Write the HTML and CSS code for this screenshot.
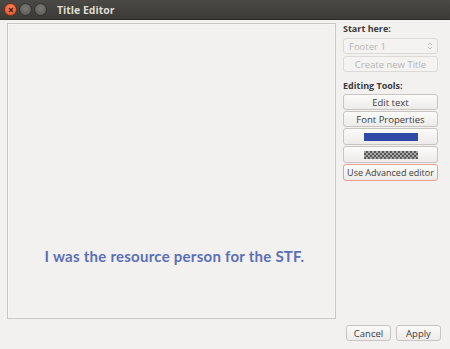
FILE: index.html
```html
<!DOCTYPE html>
<html>
<head>
<meta charset="utf-8">
<link rel="stylesheet" href="styles.css">
</head>
<body>
<div class="window">
  <div class="titlebar">
    <div class="wbtns">
      <span class="wbtn close"><svg width="8" height="8" viewBox="0 0 8 8"><path d="M2 2L6 6M6 2L2 6" stroke="#4a1a0a" stroke-width="1.3"/></svg></span>
      <span class="wbtn"></span>
      <span class="wbtn"></span>
    </div>
    <div class="title">Title Editor</div>
  </div>
  <div class="content">
    <div class="main">
      <div class="canvas">
        <div class="sample">I was the resource person for the STF.</div>
      </div>
      <div class="side">
        <div class="label">Start here:</div>
        <div class="combo disabled"><span>Footer 1</span><svg width="6" height="10" viewBox="0 0 6 10"><path d="M1 4L3 2L5 4M1 6L3 8L5 6" fill="none" stroke="#bbb" stroke-width="1"/></svg></div>
        <div class="btn disabled">Create new Title</div>
        <div class="label tools">Editing Tools:</div>
        <div class="btn">Edit text</div>
        <div class="btn">Font Properties</div>
        <div class="btn swatch"><span class="blue"></span></div>
        <div class="btn swatch"><span class="checker"></span></div>
        <div class="btn adv">Use Advanced editor</div>
      </div>
    </div>
    <div class="footer">
      <div class="btn foot">Cancel</div>
      <div class="btn foot">Apply</div>
    </div>
  </div>
</div>
</body>
</html>
```
FILE: styles.css
```css
html, body { margin: 0; padding: 0; }
* { box-sizing: border-box; }
body { width: 450px; height: 349px; overflow: hidden; background: #f2f1f0; font-family: "Open Sans", "DejaVu Sans", sans-serif; }
.window { width: 450px; height: 349px; display: flex; flex-direction: column; }
.titlebar { height: 20px; background: linear-gradient(#4a4945, #3c3b37); display: flex; align-items: center; padding-left: 4px; border-bottom: 1px solid #2b2a27; }
.wbtns { display: flex; gap: 2px; }
.wbtn { width: 13px; height: 13px; border-radius: 50%; background: radial-gradient(circle at 50% 40%, #7b7a76, #55544f); border: 1px solid #33322e; display: flex; align-items: center; justify-content: center; }
.wbtn.close { background: radial-gradient(circle at 50% 40%, #f48a5c, #e0512a); border-color: #8a2e14; }
.title { color: #dfdbd2; font-weight: bold; font-size: 10.5px; margin-left: 10px; }
.content { flex: 1; display: flex; flex-direction: column; padding: 3px 12px 8px 7px; }
.main { flex: 1; display: flex; gap: 7px; }
.canvas { width: 329px; height: 296px; border: 1px solid #c9c7c3; background: #f2f1f0; box-shadow: inset 0 0 0 1px #f7f6f5; display: flex; align-items: flex-end; justify-content: center; }
.sample { color: #5c6fb7; font-size: 15px; font-weight: bold; font-family: "Lato", "Open Sans", sans-serif; margin-bottom: 53px; letter-spacing: 0.25px; margin-left: 6px; }
.side { flex: 1; display: flex; flex-direction: column; }
.label { font-size: 9px; line-height: 12px; font-weight: bold; color: #3c3c3c; margin-bottom: 3px; }
.label.tools { margin-top: 7px; margin-bottom: 2px; }
.btn { height: 16px; border: 1px solid #c8c5c0; border-radius: 3px; background: linear-gradient(#fbfbfa, #ecebea); font-size: 9.5px; color: #3c3c3c; display: flex; align-items: center; justify-content: center; margin-bottom: 1px; white-space: nowrap; }
.btn.disabled { color: #b7b5b1; background: #f4f3f2; border-color: #dcdad6; }
.combo { height: 16px; border: 1px solid #dcdad6; border-radius: 3px; background: #f4f3f2; font-size: 9.5px; color: #b7b5b1; display: flex; align-items: center; justify-content: space-between; padding: 0 4px 0 5px; margin-bottom: 2px; }
.swatch { height: 17px; }
.swatch span { width: 54px; height: 8px; display: block; }
.blue { background: #2f4aa6; }
.checker { background-color: #a8a8a8; background-image: linear-gradient(45deg, #585858 25%, transparent 25%, transparent 75%, #585858 75%), linear-gradient(45deg, #585858 25%, transparent 25%, transparent 75%, #585858 75%); background-size: 4px 4px; background-position: 0 0, 2px 2px; }
.btn.adv { border-color: #e9a292; height: 17px; font-size: 9px; }
.footer { display: flex; justify-content: flex-end; gap: 5px; margin-top: 5px; margin-right: -3px; }
.btn.foot { width: 45px; height: 16px; margin: 0; }
```
